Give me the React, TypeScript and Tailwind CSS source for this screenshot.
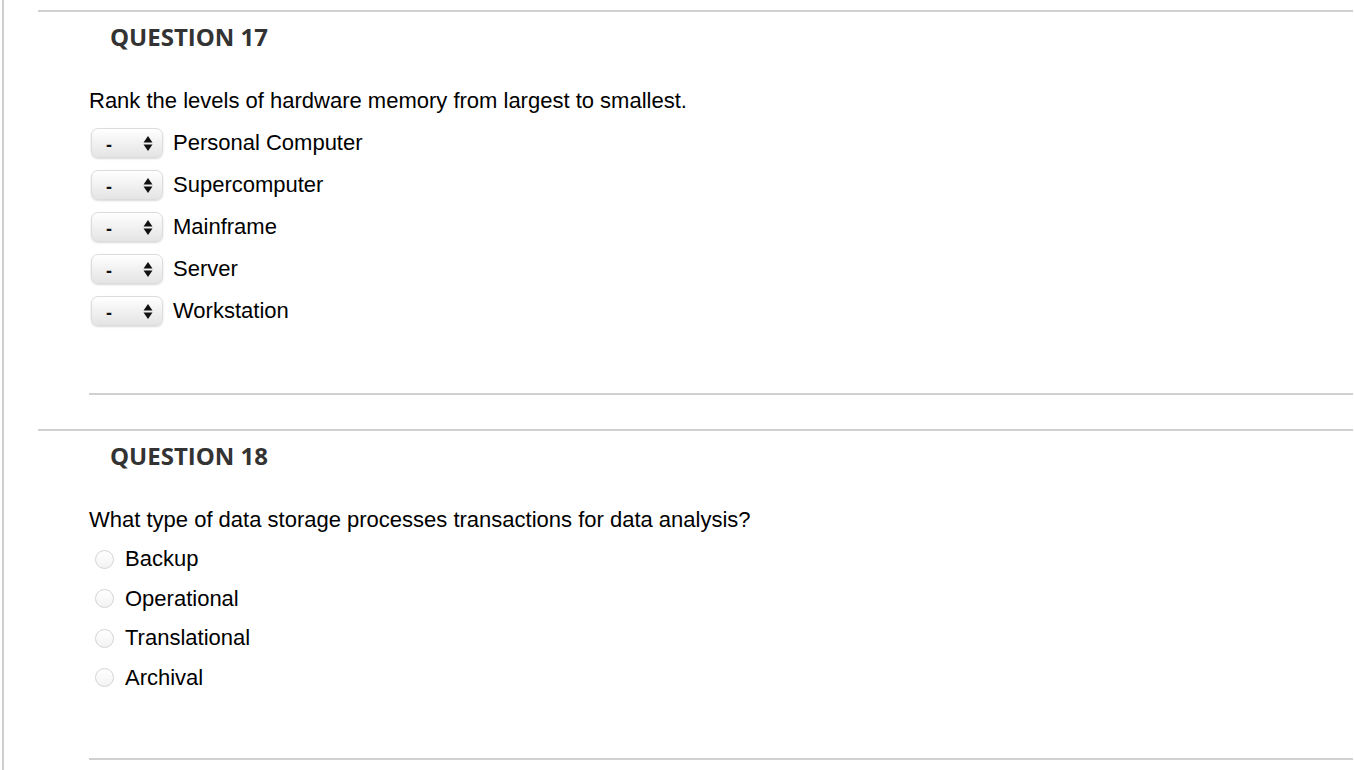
import React from 'react';

const rankItems = ['Personal Computer', 'Supercomputer', 'Mainframe', 'Server', 'Workstation'];
const choices = ['Backup', 'Operational', 'Translational', 'Archival'];

function RankSelect() {
  return (
    <div className="flex h-[30px] w-[72px] items-center justify-between rounded-[7px] border border-[#dcdcdc] bg-gradient-to-b from-[#ffffff] to-[#e4e4e4] pl-[14px] pr-[9px] shadow-[0_1px_2px_rgba(0,0,0,0.15)]">
      <span className="pt-[3px] text-[18px] font-bold leading-none text-[#111]">-</span>
      <svg width="10" height="17" viewBox="0 0 10 17">
        <path d="M5 1 L9.5 7.5 L0.5 7.5 Z" fill="#111" />
        <path d="M5 16 L9.5 9.5 L0.5 9.5 Z" fill="#111" />
      </svg>
    </div>
  );
}

function QuestionHeader({ n }: { n: number }) {
  return (
    <h2 className="pl-[72px] pt-[9px] font-['Open_Sans',sans-serif] text-[24px] font-bold leading-[32px] text-[#333]">
      QUESTION {n}
    </h2>
  );
}

export default function App() {
  return (
    <div className="flex min-h-[770px] bg-white font-['Liberation_Sans',Arial,sans-serif] text-black">
      <div className="ml-[2px] w-[2px] shrink-0 bg-[#cfcfcf]" />
      <main className="ml-[34px] flex-1 pr-[1px]">
        {/* Question 17 */}
        <section className="mt-[10px] border-t-2 border-[#d0d0d0]">
          <QuestionHeader n={17} />
          <div className="ml-[51px] border-b-2 border-[#d0d0d0] pt-[36px] pb-[67px]">
            <p className="text-[22px] leading-[24px]">Rank the levels of hardware memory from largest to smallest.</p>
            <ul className="mt-[15px] flex flex-col gap-[12px] pl-[2px]">
              {rankItems.map((item) => (
                <li key={item} className="flex items-center gap-[10px]">
                  <RankSelect />
                  <span className="text-[22px] leading-[24px]">{item}</span>
                </li>
              ))}
            </ul>
          </div>
        </section>

        {/* Question 18 */}
        <section className="mt-[34px] border-t-2 border-[#d0d0d0]">
          <QuestionHeader n={18} />
          <div className="ml-[51px] border-b-2 border-[#d0d0d0] pt-[36px] pb-[68px]">
            <p className="text-[22px] leading-[24px]">What type of data storage processes transactions for data analysis?</p>
            <ul className="mt-[15px] flex flex-col gap-[15.5px] pl-[6px]">
              {choices.map((c) => (
                <li key={c} className="flex items-center gap-[11px]">
                  <input
                    type="radio"
                    name="q18"
                    className="h-[19px] w-[19px] appearance-none rounded-full border border-[#d4d4d4] bg-gradient-to-b from-[#ffffff] to-[#f3f3f3]"
                  />
                  <span className="text-[22px] leading-[24px]">{c}</span>
                </li>
              ))}
            </ul>
          </div>
        </section>
      </main>
    </div>
  );
}
